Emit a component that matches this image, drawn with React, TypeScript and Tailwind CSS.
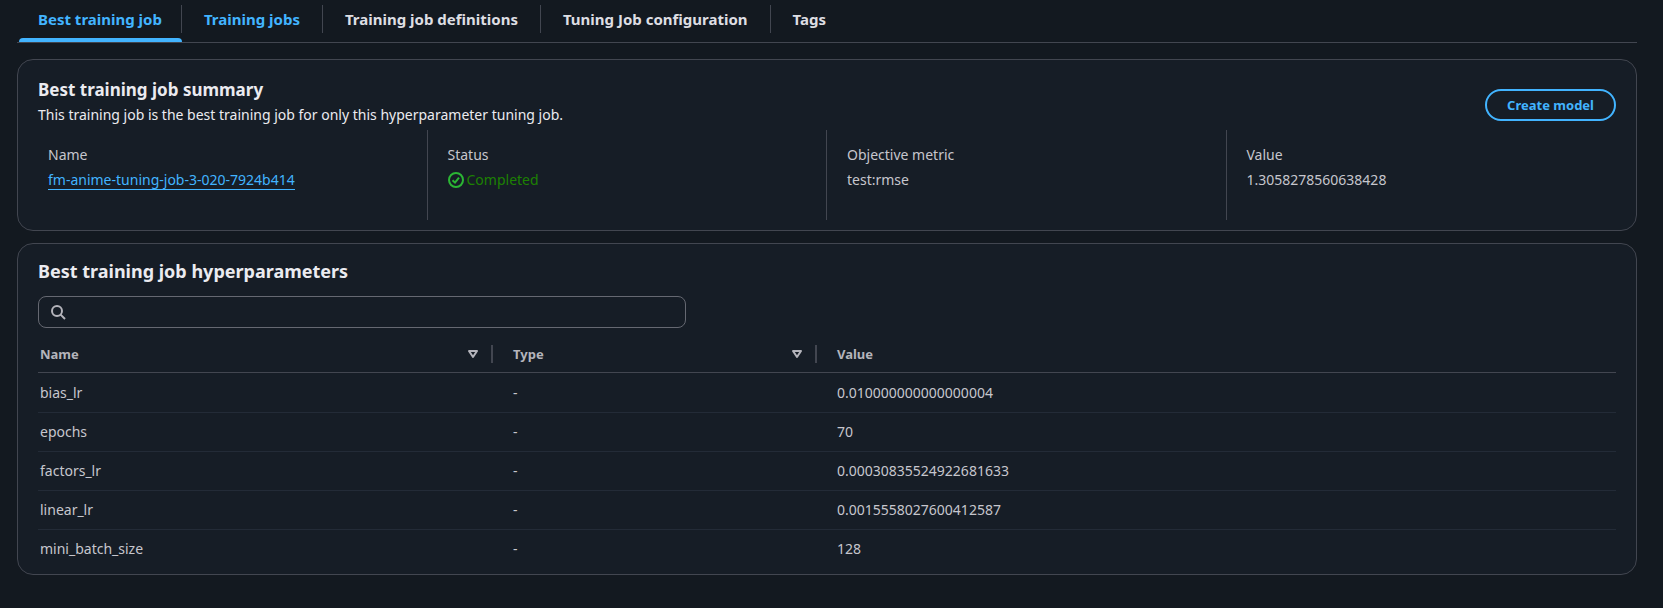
const tabs = [
  { label: 'Best training job', tone: 'px-[19px] text-[#42b4ff]', active: true },
  { label: 'Training jobs', tone: 'px-[22px] text-[#42b4ff]', active: false },
  { label: 'Training job definitions', tone: 'px-[22px] text-[#dedee3]', active: false },
  { label: 'Tuning Job configuration', tone: 'px-[22px] text-[#dedee3]', active: false },
  { label: 'Tags', tone: 'px-[22px] text-[#dedee3]', active: false },
];

const rows = [
  { name: 'bias_lr', type: '-', value: '0.010000000000000004' },
  { name: 'epochs', type: '-', value: '70' },
  { name: 'factors_lr', type: '-', value: '0.00030835524922681633' },
  { name: 'linear_lr', type: '-', value: '0.0015558027600412587' },
  { name: 'mini_batch_size', type: '-', value: '128' },
];

function SortIcon() {
  return (
    <svg width="12" height="10" viewBox="0 0 12 10" fill="none" aria-hidden="true">
      <path d="M2 2h8L6 8z" stroke="#b4b4bb" strokeWidth="2" strokeLinejoin="round" />
    </svg>
  );
}

function Tabs() {
  return (
    <div role="tablist" className="flex h-[43px] border-b border-[#424650] pl-0.5">
      {tabs.map((tab, i) => (
        <div key={tab.label} className="relative flex items-start pt-[5px]">
          <button
            type="button"
            role="tab"
            aria-selected={tab.active}
            className={`h-7 text-[15px] leading-7 font-bold ${tab.tone}`}
          >
            {tab.label}
          </button>
          {i < tabs.length - 1 && <span className="h-7 w-px bg-[#424650]" />}
          {tab.active && (
            <span className="absolute right-0 bottom-0 left-0 h-1 rounded-t-sm bg-[#42b4ff]" />
          )}
        </div>
      ))}
    </div>
  );
}

function Summary() {
  return (
    <section className="mt-4 rounded-2xl border border-[#424650] bg-[#161d26] px-5 pt-[18px] pb-[10px]">
      <div className="flex items-start justify-between">
        <div>
          <h2 className="text-[17px] leading-6 font-bold text-[#ebebf0]">Best training job summary</h2>
          <p className="mt-[3px] text-[14px] leading-5 text-[#ebebf0]">
            This training job is the best training job for only this hyperparameter tuning job.
          </p>
        </div>
        <button
          type="button"
          className="mt-[11px] h-8 rounded-full border-2 border-[#42b4ff] px-5 text-[13px] leading-5 font-bold text-[#42b4ff]"
        >
          Create model
        </button>
      </div>
      <dl className="-mx-2.5 mt-[5px] grid h-[90px] grid-cols-4 text-[14px] leading-5 text-[#c6c6cd]">
        <div className="border-r border-[#424650] pt-[15px] pl-5">
          <dt>Name</dt>
          <dd className="mt-[5px]">
            <a href="#job" className="inline-block h-5 border-b border-[#42b4ff] text-[#42b4ff]">
              fm-anime-tuning-job-3-020-7924b414
            </a>
          </dd>
        </div>
        <div className="border-r border-[#424650] pt-[15px] pl-5">
          <dt>Status</dt>
          <dd className="mt-[5px] flex items-center gap-[3px] text-[#1d8102]">
            <svg width="16" height="16" viewBox="0 0 16 16" fill="none" stroke="#2bb534" strokeWidth="2" aria-hidden="true">
              <circle cx="8" cy="8" r="7" />
              <path d="M4.5 8.2l2.5 2.4 4-5" />
            </svg>
            Completed
          </dd>
        </div>
        <div className="border-r border-[#424650] pt-[15px] pl-5">
          <dt>Objective metric</dt>
          <dd className="mt-[5px]">test:rmse</dd>
        </div>
        <div className="pt-[15px] pl-5">
          <dt>Value</dt>
          <dd className="mt-[5px]">1.3058278560638428</dd>
        </div>
      </dl>
    </section>
  );
}

function Hyperparameters() {
  return (
    <section className="mt-3 rounded-2xl border border-[#424650] bg-[#161d26] px-5 pt-[15px] pb-[5px]">
      <h2 className="text-[18px] leading-6 font-bold text-[#ebebf0]">Best training job hyperparameters</h2>
      <label className="mt-[13px] flex h-8 w-[648px] max-w-full items-center gap-2 rounded-lg border border-[#656871] px-[11px]">
        <svg width="16" height="16" viewBox="0 0 16 16" fill="none" stroke="#b4b4bb" strokeWidth="2" aria-hidden="true">
          <circle cx="7" cy="7" r="5" />
          <path d="M10.6 10.6L15 15" />
        </svg>
        <input
          type="text"
          aria-label="Find hyperparameters"
          className="min-w-0 flex-1 bg-transparent text-[14px] text-[#dedee3] outline-none"
        />
      </label>
      <table className="mt-2 w-full table-fixed border-separate border-spacing-0 text-left text-[14px] leading-5 text-[#c6c6cd]">
        <colgroup>
          <col className="w-[455px]" />
          <col className="w-[324px]" />
          <col />
        </colgroup>
        <thead>
          <tr className="text-[13px] text-[#b4b4bb]">
            <th className="h-[37px] border-b border-[#424650] pl-0.5 font-bold">
              <div className="flex items-center">
                <span className="flex-1">Name</span>
                <SortIcon />
                <span className="ml-3 h-[18px] w-0.5 bg-[#424650]" />
              </div>
            </th>
            <th className="h-[37px] border-b border-[#424650] pl-5 font-bold">
              <div className="flex items-center">
                <span className="flex-1">Type</span>
                <SortIcon />
                <span className="ml-3 h-[18px] w-0.5 bg-[#424650]" />
              </div>
            </th>
            <th className="h-[37px] border-b border-[#424650] pl-5 font-bold">Value</th>
          </tr>
        </thead>
        <tbody className="[&>tr:first-child>td]:h-10 [&>tr:last-child>td]:border-transparent">
          {rows.map((row) => (
            <tr key={row.name}>
              <td className="h-[39px] border-b border-[#232b37] pl-0.5">{row.name}</td>
              <td className="h-[39px] border-b border-[#232b37] pl-5">{row.type}</td>
              <td className="h-[39px] border-b border-[#232b37] pl-5">{row.value}</td>
            </tr>
          ))}
        </tbody>
      </table>
    </section>
  );
}

export default function App() {
  return (
    <main className="min-h-screen bg-[#131920] pr-[26px] pb-8 pl-[17px] font-['Noto_Sans',sans-serif]">
      <Tabs />
      <Summary />
      <Hyperparameters />
    </main>
  );
}
